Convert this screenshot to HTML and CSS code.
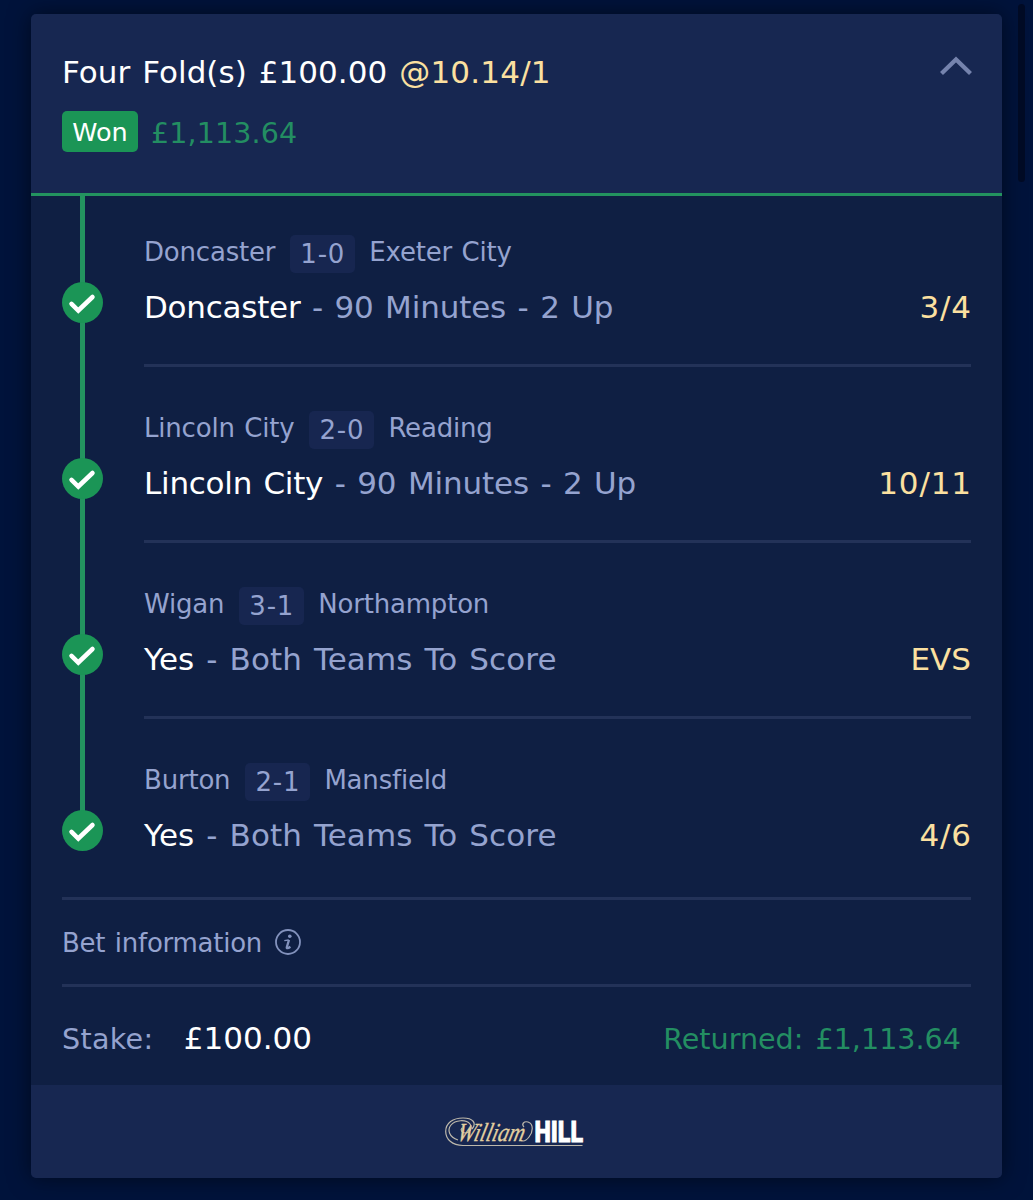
FILE: index.html
```
<!DOCTYPE html>
<html lang="en">
<head>
    <meta charset="utf-8">
    <title>Bet history</title>
    <meta name="viewport" content="width=device-width, initial-scale=1">
    <link rel="stylesheet" href="styles.css">
</head>
<body>
<svg class="sprite" width="0" height="0">
    <symbol id="tick" viewBox="0 0 41 41">
        <circle cx="20.5" cy="20.5" r="20.5" fill="#1b9556"/>
        <path d="M9.500 21.800l6.800 6.700L30.500 15" fill="none" stroke="#fff" stroke-width="4.500" stroke-linecap="round" stroke-linejoin="miter"/>
    </symbol>
</svg>
<div class="card">
    <header class="card-header">
        <div class="title-row">
            <h1>Four Fold(s) £100.00 <span class="price">@10.14/1</span></h1>
            <svg class="chevron" width="32" height="20" viewBox="0 0 32 20">
                <path d="M1.500 17.600L16 3.400l14.500 14.200" fill="none" stroke="#7583ad" stroke-width="4.2"/>
            </svg>
        </div>
        <div class="status-row">
            <span class="won">Won</span>
            <span class="won-amount">£1,113.64</span>
        </div>
    </header>

    <main class="card-body">
        <section class="leg">
            <div class="rail"><svg class="tick"><use href="#tick"/></svg></div>
            <div class="leg-info">
                <div class="teams"><span>Doncaster</span><b class="score">1-0</b><span>Exeter City</span></div>
                <div class="selection">
                    <div class="market minutes"><strong>Doncaster</strong> - 90 Minutes - 2 Up</div>
                    <div class="price odds">3/4</div>
                </div>
            </div>
        </section>
        <section class="leg">
            <div class="rail"><svg class="tick"><use href="#tick"/></svg></div>
            <div class="leg-info">
                <div class="teams"><span>Lincoln City</span><b class="score">2-0</b><span>Reading</span></div>
                <div class="selection">
                    <div class="market minutes"><strong>Lincoln City</strong> - 90 Minutes - 2 Up</div>
                    <div class="price odds">10/11</div>
                </div>
            </div>
        </section>
        <section class="leg">
            <div class="rail"><svg class="tick"><use href="#tick"/></svg></div>
            <div class="leg-info">
                <div class="teams"><span>Wigan</span><b class="score">3-1</b><span>Northampton</span></div>
                <div class="selection">
                    <div class="market"><strong>Yes</strong> - Both Teams To Score</div>
                    <div class="price">EVS</div>
                </div>
            </div>
        </section>
        <section class="leg">
            <div class="rail"><svg class="tick"><use href="#tick"/></svg></div>
            <div class="leg-info">
                <div class="teams"><span>Burton</span><b class="score">2-1</b><span>Mansfield</span></div>
                <div class="selection">
                    <div class="market"><strong>Yes</strong> - Both Teams To Score</div>
                    <div class="price odds">4/6</div>
                </div>
            </div>
        </section>

        <div class="bet-info">
            <span>Bet information</span>
            <svg width="26" height="26" viewBox="0 0 26 26">
                <circle cx="13" cy="13" r="12" fill="none" stroke="#8392bd" stroke-width="1.8"/>
                <circle cx="14.8" cy="7.2" r="1.8" fill="#8392bd"/>
                <path d="M9.300 11.600l4.300-.6" fill="none" stroke="#8392bd" stroke-width="1.3"/>
                <path d="M14 10.800l-2.200 7.400q-.4 2.200 3.600-.5" fill="none" stroke="#8392bd" stroke-width="2.3"/>
            </svg>
        </div>

        <div class="totals">
            <div class="stake">Stake: <span>£100.00</span></div>
            <div class="returned">Returned: £1,113.64</div>
        </div>
    </main>

    <footer class="card-footer">
        <svg class="logo" width="185" height="48" viewBox="-20 -10 185 48">
            <g fill="none" stroke="#bdb8ab" stroke-width="1.2">
                <path d="M138.500 28.500H19C8 28.500 1.700 22 1.700 14.500C1.700 6 9 1 19 1c10 0 14 5 9 11"/>
                <path d="M14 23C5 20 3 13 7 8c4-5 15-6 19-1 3 4 0 9-5 9-3 0-5-3-3-5"/>
                <path d="M80 10c-3-3 0-6 4-5 6 2 5 10 1 15-3 4-6 5-9 3"/>
            </g>
            <text class="logo-script" transform="translate(12 24) skewX(-14)" x="0" y="0" textLength="67" lengthAdjust="spacingAndGlyphs">William</text>
            <text class="logo-bold" x="90.500" y="24.800" textLength="48.500" lengthAdjust="spacingAndGlyphs">HILL</text>
        </svg>
    </footer>
</div>
<div class="scroll-thumb"></div>
</body>
</html>
```
FILE: styles.css
```
:root {
    --page: #00133b;
    --panel: #172751;
    --body: #0f1f43;
    --line: #233258;
    --muted: #95a3cf;
    --gold: #fbe0a0;
    --green: #1b9556;
}

*, *:before, *:after {
    box-sizing: border-box;
}

body {
    margin: 0;
    padding: 14px 31px 0;
    height: 1200px;
    overflow: hidden;
    background: var(--page);
    color: var(--muted);
    font-family: Verdana, "DejaVu Sans", sans-serif;
    font-size: 26px;
}

.sprite {
    position: absolute;
}

.card {
    width: 971px;
    border-radius: 5px;
    box-shadow: 0 0 22px rgba(0, 0, 0, 0.5);
}

.card-header {
    height: 182px;
    padding: 39px 30px 0 31px;
    background: var(--panel);
    border-bottom: 3px solid #23935f;
    border-radius: 5px 5px 0 0;
}

.title-row {
    display: flex;
    justify-content: space-between;
}

h1 {
    margin: 0;
    color: #fff;
    font-size: 31px;
    font-weight: normal;
    line-height: 39px;
    letter-spacing: 0.05px;
    word-spacing: 2px;
}

.price {
    color: var(--gold);
}

h1 .price {
    letter-spacing: 0.2px;
}

.odds {
    margin-right: -0.7px;
    letter-spacing: 0.8px;
}

.chevron {
    margin-top: 3px;
}

.status-row {
    display: flex;
    align-items: center;
    gap: 13px;
    margin-top: 18px;
}

.won {
    width: 76px;
    height: 41px;
    border-radius: 5px;
    background: var(--green);
    color: #fff;
    font-size: 25.5px;
    line-height: 43px;
    text-align: center;
}

.won-amount {
    color: #238e62;
    font-size: 28.5px;
    line-height: 43px;
    letter-spacing: 0.15px;
    padding-top: 2px;
    margin-bottom: -2px;
}

.card-body {
    background: var(--body);
    height: 889px;
    padding: 0 31px;
}

.leg {
    display: flex;
    height: 176px;
}

.leg:first-child {
    height: 171px;
}

.leg:first-child .rail {
    padding-top: 86px;
}

.leg:first-child .leg-info {
    padding-top: 39px;
}

.rail {
    width: 82px;
    padding-top: 91px;
    background: linear-gradient(#23935f, #23935f) 18px 0 / 5px 100% no-repeat;
}

.leg:nth-child(4) .rail {
    background-size: 5px 100px;
}

.tick {
    display: block;
    width: 41px;
    height: 41px;
}

.leg-info {
    flex: 1;
    padding-top: 44px;
    border-bottom: 3px solid var(--line);
}

.leg:nth-child(4) .leg-info {
    border-bottom: none;
}

.teams {
    display: flex;
    line-height: 34px;
    letter-spacing: -0.2px;
    word-spacing: 1.5px;
}

.score {
    width: 65px;
    height: 38px;
    margin: 0 14px 0 15px;
    border-radius: 5px;
    background: #172650;
    font-weight: normal;
    line-height: 38px;
    letter-spacing: 0.8px;
    text-align: center;
}

.selection {
    display: flex;
    justify-content: space-between;
    margin-top: 15px;
    font-size: 31px;
    line-height: 38px;
}

.market {
    letter-spacing: 0.1px;
    word-spacing: 2px;
}

.selection strong {
    color: #fff;
    font-weight: normal;
}

.minutes {
    letter-spacing: -0.15px;
    word-spacing: 1.8px;
}

.minutes strong {
    letter-spacing: -0.25px;
}

.bet-info {
    display: flex;
    align-items: center;
    gap: 13px;
    height: 90px;
    margin-top: 2px;
    border-top: 3px solid var(--line);
    border-bottom: 3px solid var(--line);
    letter-spacing: -0.25px;
    word-spacing: 1.5px;
}

.bet-info span {
    padding-top: 1px;
}

.totals {
    display: flex;
    justify-content: space-between;
    align-items: baseline;
    padding: 33px 10px 0 0;
    font-size: 28.6px;
    word-spacing: 3px;
}

.stake {
    letter-spacing: 0.3px;
}

.stake span {
    margin-left: 18px;
    color: #fff;
    font-size: 31px;
    letter-spacing: 0;
}

.returned {
    color: #238e62;
}

.card-footer {
    display: flex;
    justify-content: center;
    height: 93px;
    padding-top: 22px;
    background: var(--panel);
    border-radius: 0 0 5px 5px;
}

.logo-script {
    fill: #e2cfa0;
    stroke: #e2cfa0;
    stroke-width: 0.3;
    font-family: "Liberation Serif", serif;
    font-size: 26px;
    font-style: italic;
}

.logo-bold {
    fill: #fff;
    stroke: #fff;
    stroke-width: 0.8;
    font-family: Roboto, sans-serif;
    font-size: 29px;
    font-weight: 900;
}

/* sits over the page edge like a native overlay scrollbar */
.scroll-thumb {
    position: absolute;
    top: 4px;
    right: 8px;
    width: 7px;
    height: 178px;
    border-radius: 4px;
    background: #000a24;
}
```
